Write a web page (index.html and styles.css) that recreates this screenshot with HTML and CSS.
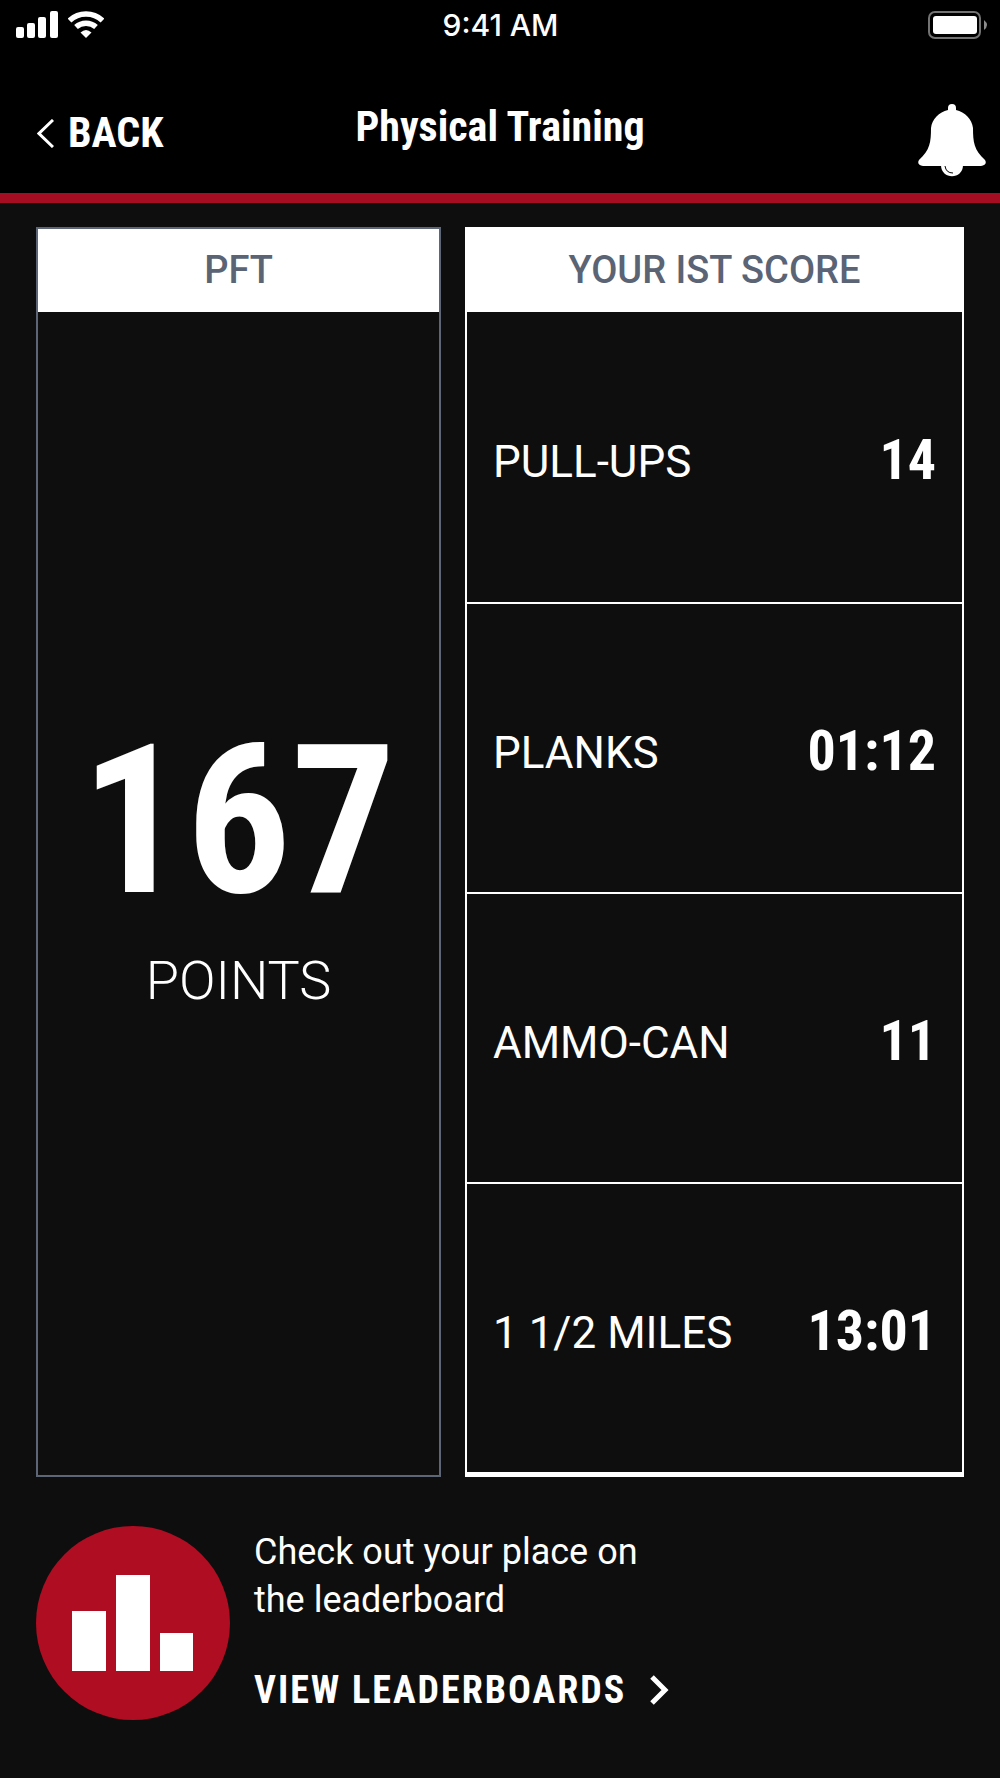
FILE: index.html
```html
<!DOCTYPE html>
<html lang="en">
<head>
    <meta charset="UTF-8">
    <meta name="viewport" content="width=device-width, initial-scale=1.0">
    <title>Physical Training</title>
    <link rel="stylesheet" href="styles.css">
</head>
<body>
    <header class="header">
        <div class="status-bar">
            <div class="signal">
                <svg width="42" height="27" viewBox="0 0 42 27" fill="#fff">
                    <rect x="0" y="16" width="8" height="11" rx="2"/>
                    <rect x="11" y="12" width="8" height="15" rx="2"/>
                    <rect x="22" y="6" width="8" height="21" rx="2"/>
                    <rect x="34" y="0" width="8" height="27" rx="2"/>
                </svg>
                <svg width="36" height="27" viewBox="0 0 36 27" fill="none" stroke="#fff" stroke-width="5.500">
                    <path d="M1.500 9.500 A24 24 0 0 1 34.500 9.500"/>
                    <path d="M8 16 A15 15 0 0 1 28 16"/>
                    <path d="M12.500 21.500 Q18 16.500 23.500 21.500 L18 27Z" fill="#fff" stroke="none"/>
                </svg>
            </div>
            <div class="time">9:41 AM</div>
            <svg class="battery" width="59" height="28" viewBox="0 0 59 28">
                <rect x="1" y="1" width="51" height="26" rx="6" fill="none" stroke="#737373" stroke-width="2"/>
                <rect x="5" y="5" width="44" height="18" rx="3" fill="#fff"/>
                <path d="M56 9 Q62 14 56 19Z" fill="#8c8c8c"/>
            </svg>
        </div>
        <nav class="nav">
            <a class="back" href="#">
                <svg width="17" height="29" viewBox="0 0 17 29" fill="none" stroke="#fff" stroke-width="3">
                    <path d="M16 1 L2 14.500 L16 28"/>
                </svg>
                BACK
            </a>
            <h1>Physical Training</h1>
            <button class="bell" type="button" aria-label="Notifications">
                <svg width="68" height="73" viewBox="0 0 68 73" fill="#fff">
                    <path d="M30 6 V4 A4 4 0 0 1 38 4 V6 C47 8 54 15 55 24 C55 38 56 46 67 56 C69 59 67 62 63 62 H5 C1 62 -1 59 1 56 C12 46 13 38 13 24 C14 15 21 8 30 6Z"/>
                    <path d="M23 61 H45 C45 76 23 76 23 61Z"/>
                    <path d="M27 62 Q28 69 35 69" fill="none" stroke="#000"/>
                </svg>
            </button>
        </nav>
    </header>

    <main>
        <div class="scores">
            <section class="pft">
                <h2>PFT</h2>
                <div class="total">
                    <div class="number">167</div>
                    <div class="points">POINTS</div>
                </div>
            </section>

            <table class="ist">
                <thead>
                    <tr><th colspan="2">YOUR IST SCORE</th></tr>
                </thead>
                <tbody>
                    <tr><th scope="row">PULL-UPS</th><td>14</td></tr>
                    <tr><th scope="row">PLANKS</th><td>01:12</td></tr>
                    <tr><th scope="row">AMMO-CAN</th><td>11</td></tr>
                    <tr><th scope="row">1 1/2 MILES</th><td>13:01</td></tr>
                </tbody>
            </table>
        </div>

        <section class="leaderboard">
            <svg class="chart" width="194" height="194" viewBox="0 0 194 194">
                <circle cx="97" cy="97" r="97" fill="#af0d22"/>
                <path d="M36 85h34v60H36z M80 49h34v96H80z M124 107h33v38h-33z" fill="#fff"/>
            </svg>
            <div class="leaderboard-text">
                <p>Check out your place on<br>the leaderboard</p>
                <a href="#" class="view">
                    VIEW LEADERBOARDS
                    <svg width="19" height="30" viewBox="0 0 19 30" fill="none" stroke="#fff" stroke-width="5">
                        <path d="M2 2 L15 15 L2 28"/>
                    </svg>
                </a>
            </div>
        </section>
    </main>
</body>
</html>
```

FILE: styles.css
```css
* {
    box-sizing: border-box;
}
body {
    margin: 0;
    background-color: #0e0e0e;
    color: #fff;
    font-family: Roboto, "Liberation Sans", sans-serif;
}
svg {
    display: block;
    flex-shrink: 0;
}
a {
    color: #fff;
    text-decoration: none;
}
h1, h2, p {
    margin: 0;
}

.header {
    background-color: #000;
    border-bottom: 10px solid #a50d22;
}
.status-bar {
    display: grid;
    grid-template-columns: 1fr auto 1fr;
    align-items: center;
    height: 49px;
    padding: 0 13px 0 14px;
}
.signal {
    display: flex;
    gap: 10px;
    padding-left: 2px;
}
.time {
    font-family: Inter, sans-serif;
    font-size: 30px;
    font-weight: 500;
}
.battery {
    justify-self: end;
}
.nav {
    display: grid;
    grid-template-columns: 1fr auto 1fr;
    align-items: center;
    height: 144px;
    padding: 12px 14px 0;
}
.back {
    display: flex;
    align-items: center;
    gap: 14px;
    padding: 12px 0 0 23px;
}
.back, .nav h1, .number, .ist td, .view {
    font-family: "Roboto Condensed", "Liberation Sans Narrow", Roboto, sans-serif;
    font-weight: 700;
}
.back, .nav h1 {
    font-size: 42px;
    line-height: 52px;
}
.bell {
    justify-self: end;
    padding: 26px 0 0;
    border: none;
    background: none;
    cursor: pointer;
}

main {
    padding: 24px 36px;
}
.scores {
    display: grid;
    grid-template-columns: 405fr 499fr;
    gap: 24px;
}
.pft {
    display: flex;
    flex-direction: column;
    border: 2px solid #5c6676;
}
.pft h2, .ist thead th {
    height: 83px;
    padding: 0;
    background-color: #fff;
    color: #5a6475;
    font-size: 38px;
    font-weight: 500;
    line-height: 83px;
    text-align: center;
}
.total {
    flex: 1;
    display: flex;
    flex-direction: column;
    align-items: center;
    justify-content: center;
    gap: 20px;
    padding-bottom: 54px;
}
.number {
    font-size: 208px;
    line-height: 208px;
}
.points {
    font-size: 54px;
    font-weight: 300;
    line-height: 72px;
}

.ist {
    width: 100%;
    border: 2px solid #fff;
    border-bottom-width: 5px;
    border-spacing: 0;
}
.ist tbody th, .ist td {
    height: 290px;
    padding: 10px 26px 0;
}
.ist tbody tr + tr th, .ist tbody tr + tr td {
    border-top: 2px solid #fff;
}
.ist tbody th {
    font-size: 44px;
    font-weight: 400;
    text-align: left;
    white-space: nowrap;
}
.ist td {
    padding-top: 6px;
    font-size: 56px;
    text-align: right;
}

.leaderboard {
    display: flex;
    gap: 24px;
    padding-top: 49px;
}
.leaderboard-text {
    padding-top: 2px;
}
.leaderboard p {
    font-size: 36px;
    line-height: 48px;
}
.view {
    display: flex;
    align-items: center;
    gap: 24px;
    margin-top: 42px;
    font-size: 38px;
    line-height: 48px;
    letter-spacing: 2px;
}
```
